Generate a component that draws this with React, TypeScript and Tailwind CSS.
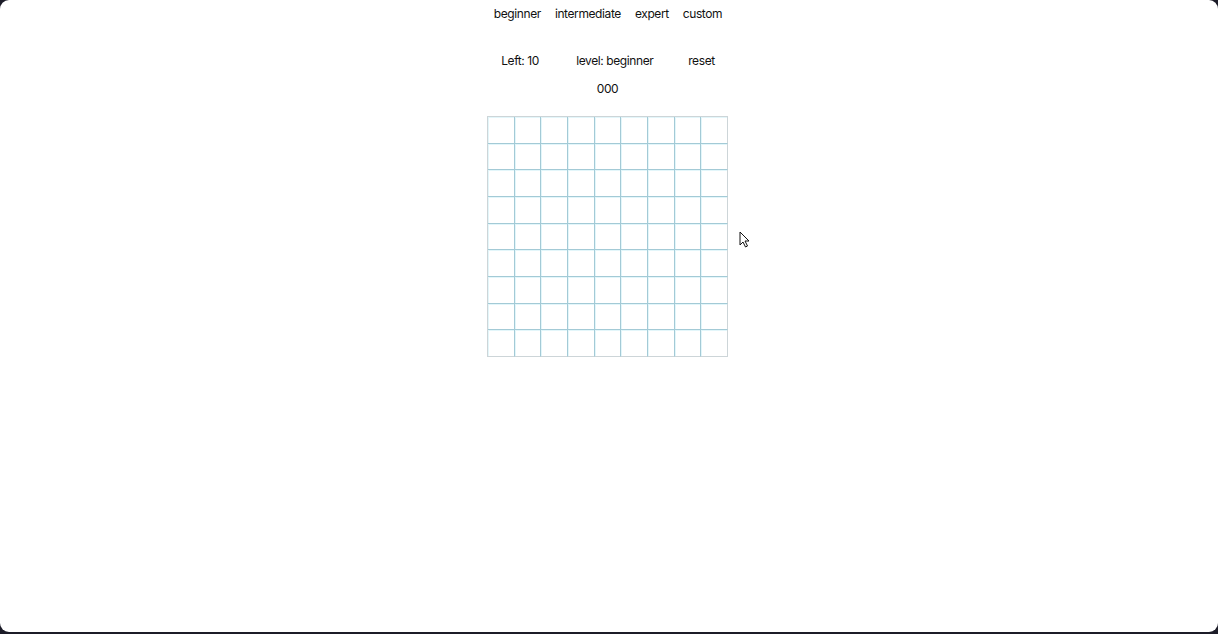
import React from "react";

const cells = Array.from({ length: 81 }, (_, i) => i);

export default function App() {
  return (
    <div className="w-[1218px] h-[634px] bg-[#1c1c28] overflow-hidden">
      <div
        className="relative w-[1218px] h-[632px] bg-white rounded-[9px] text-[12px] tracking-[-0.4px] text-[#111] flex flex-col items-center"
        style={{ fontFamily: "Inter, 'Liberation Sans', sans-serif" }}
      >
        <div className="flex gap-[14px] pt-[6px] h-[16px] box-content leading-[16px] ml-[-2px]">
          <span>beginner</span>
          <span>intermediate</span>
          <span>expert</span>
          <span>custom</span>
        </div>
        <div className="flex mt-[31px] h-[16px] leading-[16px] ml-[-2px]">
          <span className="w-[75px]">Left: 10</span>
          <span className="w-[112px]">level: beginner</span>
          <span>reset</span>
        </div>
        <div className="mt-[12px] h-[16px] leading-[16px] ml-[-3px]">000</div>
        <div className="mt-[19px] ml-[-3px] w-[241px] h-[241px] grid grid-cols-9 grid-rows-9 border-l border-t border-[#cdd5d8]">
          {cells.map((i) => (
            <div
              key={i}
              className={
                "shadow-[inset_1px_1px_0_#e3f6fa] border-[#a3cad6] " +
                (i % 9 === 8 ? "border-r border-r-[#cdd5d8] " : "border-r ") +
                (i >= 72 ? "border-b border-b-[#cdd5d8]" : "border-b")
              }
            />
          ))}
        </div>
        <svg
          className="absolute left-[739px] top-[231px]"
          width="11"
          height="17"
          viewBox="0 0 11 17"
        >
          <path
            d="M1 1 L1 14 L4 11 L6.5 16 L8.5 15 L6 10 L10 10 Z"
            fill="#fff"
            stroke="#111"
            strokeWidth="1"
            strokeLinejoin="round"
          />
        </svg>
      </div>
    </div>
  );
}
